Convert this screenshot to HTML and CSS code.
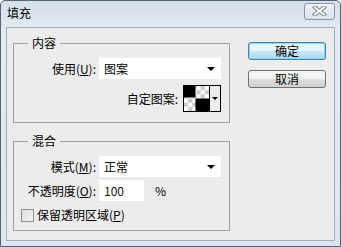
FILE: index.html
```html
<!DOCTYPE html>
<html lang="zh-CN">

<head>
    <meta charset="UTF-8">
    <title>填充</title>
    <link rel="stylesheet" href="styles.css">
</head>

<body>
    <div class="window">
        <div class="titlebar">
            <span class="title">填充</span>
            <button class="close">
                <svg width="15" height="10" viewBox="0 0 15 10">
                    <path d="M3 1.5 L12 8.5 M12 1.5 L3 8.5" stroke="#6d7c8e" stroke-width="4" stroke-linecap="square" fill="none"/>
                    <path d="M3 1.5 L12 8.5 M12 1.5 L3 8.5" stroke="#ffffff" stroke-width="2" stroke-linecap="square" fill="none"/>
                </svg>
            </button>
        </div>

        <div class="client">
            <div class="groups">
                <fieldset class="group">
                    <legend>内容</legend>
                    <div class="row">
                        <label class="lbl">使用(<u>U</u>):</label>
                        <div class="select"><span>图案</span><i class="arrow"></i></div>
                    </div>
                    <div class="row row-end">
                        <label>自定图案:</label>
                        <div class="pattern">
                            <svg class="swatch" width="25" height="25" viewBox="0 0 24 24">
                                <defs>
                                    <pattern id="chk" width="8" height="8" patternUnits="userSpaceOnUse">
                                        <rect width="8" height="8" fill="#ffffff"/>
                                        <rect width="4" height="4" fill="#c9c9c9"/>
                                        <rect x="4" y="4" width="4" height="4" fill="#c9c9c9"/>
                                    </pattern>
                                </defs>
                                <rect width="24" height="24" fill="url(#chk)"/>
                                <rect width="11" height="11" fill="#000"/>
                                <rect x="11" y="12" width="13" height="12" fill="#000"/>
                            </svg>
                            <span class="pattern-arrow"><i class="arrow"></i></span>
                        </div>
                    </div>
                </fieldset>

                <fieldset class="group group-blend">
                    <legend>混合</legend>
                    <div class="row">
                        <label class="lbl">模式(<u>M</u>):</label>
                        <div class="select"><span>正常</span><i class="arrow"></i></div>
                    </div>
                    <div class="row row-gap">
                        <label class="lbl">不透明度(<u>O</u>):</label>
                        <div class="field">100</div>
                        <span class="unit">%</span>
                    </div>
                    <div class="row row-check">
                        <span class="checkbox"></span>
                        <label>保留透明区域(<u>P</u>)</label>
                    </div>
                </fieldset>
            </div>

            <div class="buttons">
                <button class="btn btn-default">确定</button>
                <button class="btn">取消</button>
            </div>
        </div>
    </div>
</body>

</html>
```

FILE: styles.css
```css
body {
    margin: 0;
    font-family: "Noto Sans CJK SC", "DejaVu Sans", sans-serif;
    font-size: 12px;
    color: #000;
}

.window {
    width: 341px;
    height: 247px;
    box-sizing: border-box;
    border: 1px solid #59636e;
    border-radius: 5px 5px 0 0;
    padding: 0 5px 5px 5px;
    background: linear-gradient(#d3dfeb, #e3eaf2 30px, #dde5ee);
}

.titlebar {
    height: 26px;
    display: flex;
    align-items: center;
    justify-content: space-between;
}

.title {
    margin-left: 1px;
    margin-top: -2px;
    line-height: 16px;
}

.close {
    width: 31px;
    height: 17px;
    margin-top: -6px;
    margin-right: 0;
    padding: 0;
    border: 1px solid #8595a8;
    border-radius: 3px;
    background: linear-gradient(#f1f4f8, #d9e1ea);
    display: flex;
    align-items: center;
    justify-content: center;
}

.client {
    height: 214px;
    box-sizing: border-box;
    border: 1px solid #a4afbb;
    background: #ececec;
    padding: 7px 0 0 6px;
    display: flex;
    align-items: flex-start;
}

.group {
    width: 217px;
    box-sizing: border-box;
    margin: 0;
    padding: 0 8px 10px 0;
    border: 1px solid #a0a0a0;
    min-width: 0;
}

.group legend {
    margin-left: 14px;
    padding: 0 4px;
    line-height: 16px;
}

.group-blend {
    margin-top: 10px;
    padding-bottom: 7px;
}

.row {
    display: flex;
    align-items: center;
    margin-top: 7px;
}

.row-end {
    justify-content: flex-end;
    margin-top: 6px;
}

.row-end label {
    margin-right: 5px;
}

.row-gap {
    margin-top: 3px;
}

.row-check {
    margin-top: 6px;
    padding-left: 7px;
    line-height: 16px;
}

.lbl {
    width: 85px;
    box-sizing: border-box;
    text-align: right;
    padding-right: 3px;
}

.select {
    width: 122px;
    height: 21px;
    box-sizing: border-box;
    background: #fff;
    padding: 0 6px 0 5px;
    display: flex;
    align-items: center;
    justify-content: space-between;
}

.arrow {
    width: 0;
    height: 0;
    border-left: 4px solid transparent;
    border-right: 4px solid transparent;
    border-top: 4px solid #000;
}

.pattern {
    width: 38px;
    height: 27px;
    box-sizing: border-box;
    border: 1px solid #000;
    display: flex;
}

.swatch {
    display: block;
}

.pattern-arrow {
    flex: 1;
    border-left: 1px solid #000;
    display: flex;
    align-items: center;
    justify-content: center;
}

.pattern-arrow .arrow {
    border-left-width: 3px;
    border-right-width: 3px;
    border-top-width: 3px;
}

.field {
    width: 45px;
    height: 21px;
    box-sizing: border-box;
    background: #fff;
    padding-left: 5px;
    line-height: 21px;
    color: #1a1010;
}

.unit {
    margin-left: 11px;
}

.checkbox {
    width: 13px;
    height: 13px;
    box-sizing: border-box;
    border: 1px solid #8e8e8e;
    background: linear-gradient(135deg, #dcdcdc, #f4f4f4);
    margin-right: 3px;
}

.buttons {
    margin-left: 18px;
    margin-top: 7px;
    display: flex;
    flex-direction: column;
    gap: 10px;
}

.btn {
    width: 78px;
    height: 18px;
    padding: 0;
    font-family: inherit;
    font-size: 12px;
    line-height: 14px;
    border: 1px solid #707070;
    border-radius: 3px;
    background: linear-gradient(#f4f4f4 45%, #dcdcdc 55%, #d0d0d0);
    color: #000;
}

.btn-default {
    border-color: #3c7fb1;
    background: linear-gradient(#e8f5fc 45%, #c4e5f6 55%, #a7d9f5);
    box-shadow: inset 0 0 0 1px #8ed7f7;
}
```
